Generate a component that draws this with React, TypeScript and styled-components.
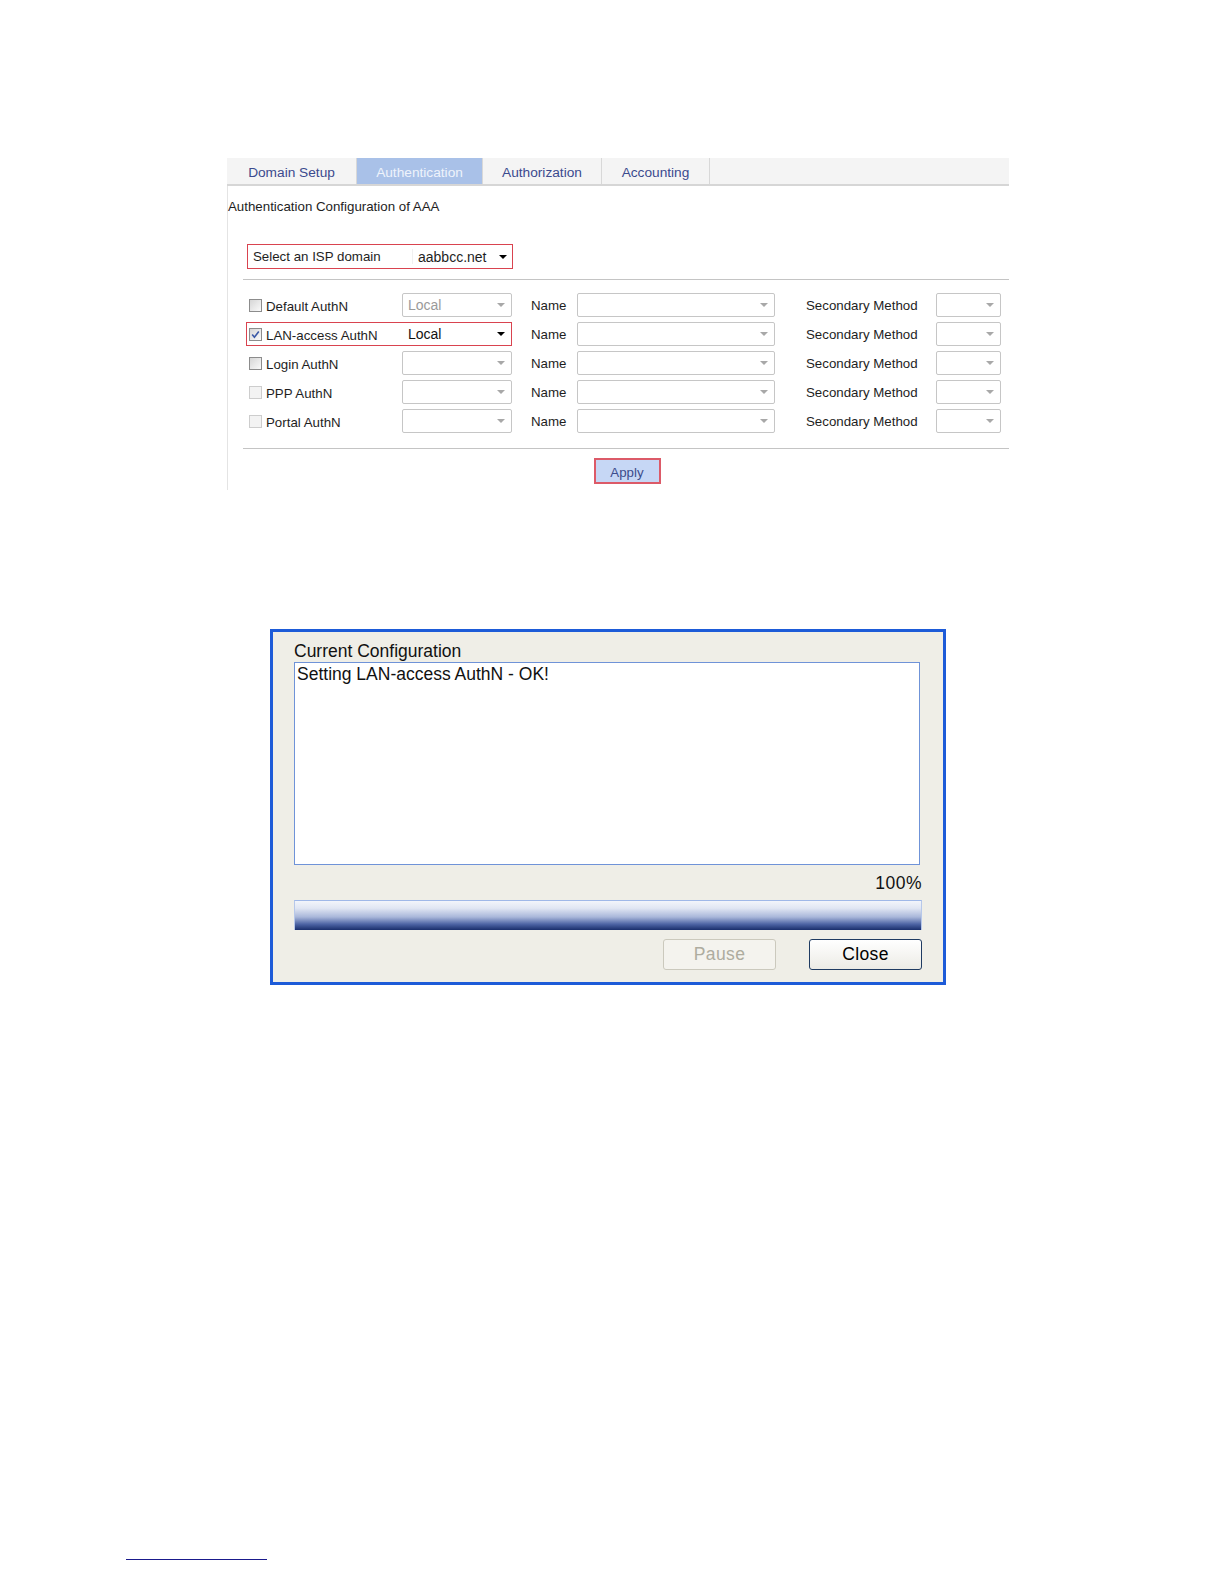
import React from 'react'
import styled, { createGlobalStyle } from 'styled-components'

const colors = {
  tabBar: "#f4f4f4",
  tabText: "#3b4a8e",
  tabActive: "#a9c1e8",
  red: "#d9434f",
  text: "#1e1e1e",
  muted: "#9a9a9a",
  line: "#c4c4c4",
  dialogBlue: "#1d5bd8",
  dialogBg: "#efeee7",
}

const GlobalStyle = createGlobalStyle`
  html, body {
    margin: 0;
    padding: 0;
    background: #fff;
    overflow: hidden;
  }
  body {
    font-family: 'Liberation Sans', Arial, sans-serif;
  }
`

const Page = styled.div`
  padding-top: 158px;
  display: flex;
  flex-direction: column;
  align-items: flex-start;
`

const Panel = styled.section`
  margin-left: 227px;
  width: 782px;
  display: flex;
  flex-direction: column;
`

const TabBar = styled.div`
  display: flex;
  height: 28px;
  box-sizing: border-box;
  background: ${colors.tabBar};
  border-bottom: 2px solid #d6d6d6;
`

const Tab = styled.div<{ $width: number; $active?: boolean }>`
  width: ${p => p.$width}px;
  box-sizing: border-box;
  display: flex;
  align-items: center;
  justify-content: center;
  padding-top: 3px;
  font-size: 13.7px;
  color: ${p => (p.$active ? '#eef3fb' : colors.tabText)};
  background: ${p => (p.$active ? colors.tabActive : 'transparent')};
  border-right: 1px solid #d8d8d8;
`

const Body = styled.div`
  border-left: 1px solid #e4e4e4;
  padding: 13px 0 6px 0;
  display: flex;
  flex-direction: column;
`

const Caption = styled.div`
  font-size: 13.3px;
  line-height: 16px;
  color: ${colors.text};
`

const IspBox = styled.div`
  margin: 29px 0 0 19px;
  width: 266px;
  height: 25px;
  box-sizing: border-box;
  border: 1px solid ${colors.red};
  display: flex;
  align-items: center;
  font-size: 13.3px;
  color: ${colors.text};
`

const IspLabel = styled.span`
  width: 165px;
  padding-left: 5px;
  box-sizing: border-box;
  border-right: 1px solid #f0f0f0;
`

const IspValue = styled.span`
  flex: 1;
  display: flex;
  align-items: center;
  justify-content: space-between;
  padding: 1px 5px 0 5px;
  font-size: 14px;
`

const Divider = styled.div<{ $top: number }>`
  margin: ${p => p.$top}px 0 0 15px;
  border-top: 1px solid ${colors.line};
`

const Rows = styled.div`
  margin: 13px 0 0 18px;
  display: flex;
  flex-direction: column;
  gap: 5px;
`

const Row = styled.div`
  display: grid;
  grid-template-columns: 266px 65px 198px 161px 65px;
  height: 24px;
  align-items: center;
  font-size: 13.3px;
  color: ${colors.text};
`

const Lead = styled.div<{ $highlight?: boolean }>`
  display: grid;
  grid-template-columns: 156px 110px;
  height: 24px;
  align-items: center;
  outline: ${p => (p.$highlight ? `1px solid ${colors.red}` : 'none')};
  outline-offset: -1px;
`

const CheckLabel = styled.label`
  display: flex;
  align-items: center;
  gap: 4px;
  padding: 2px 0 0 3px;
`

const Box = styled.span<{ $dim?: boolean }>`
  width: 13px;
  height: 13px;
  box-sizing: border-box;
  display: inline-flex;
  border: 1px solid ${p => (p.$dim ? '#cdcdcd' : '#8c8c8c')};
  background: ${p => (p.$dim ? '#f3f3f3' : 'linear-gradient(135deg, #d6d6d6, #fafafa)')};
  margin-top: -2px;
`

const FieldLabel = styled.span<{ $pad: number }>`
  padding-left: ${p => p.$pad}px;
`

const Combo = styled.div<{ $bare?: boolean; $muted?: boolean }>`
  height: 24px;
  box-sizing: border-box;
  border: 1px solid ${p => (p.$bare ? 'transparent' : '#c6c6c6')};
  border-radius: 2px;
  background: ${p => (p.$bare ? 'transparent' : '#fff')};
  display: flex;
  align-items: center;
  justify-content: space-between;
  padding: 0 6px 0 5px;
  font-size: 14px;
  color: ${p => (p.$muted ? colors.muted : '#111')};
`

const Caret = styled.span<{ $dark?: boolean }>`
  width: 0;
  height: 0;
  border-left: 4px solid transparent;
  border-right: 4px solid transparent;
  border-top: 4px solid ${p => (p.$dark ? '#000' : '#a8a8a8')};
  margin-left: auto;
`

const ApplyWrap = styled.div`
  margin: 9px 0 0 15px;
  display: flex;
  justify-content: center;
`

const ApplyButton = styled.button`
  width: 67px;
  height: 26px;
  box-sizing: border-box;
  border: 2px solid #dc5a68;
  background: #c6d7f5;
  color: #3c4c8c;
  font-family: 'Liberation Sans', Arial, sans-serif;
  font-size: 13.3px;
  padding: 3px 0 0 0;
  margin-left: 2px;
`

const Dialog = styled.section`
  margin: 139px 0 0 270px;
  width: 676px;
  height: 356px;
  box-sizing: border-box;
  border: 3px solid ${colors.dialogBlue};
  background: ${colors.dialogBg};
  padding: 9px 21px 0 21px;
  display: flex;
  flex-direction: column;
  font-size: 17.5px;
  color: #111;
`

const DialogTitle = styled.div`
  line-height: 20px;
  height: 20px;
`

const Output = styled.div`
  margin-top: 1px;
  width: 626px;
  height: 203px;
  box-sizing: border-box;
  border: 1px solid #6f93d8;
  background: #fff;
  padding: 1px 2px;
  line-height: 20px;
`

const Percent = styled.div`
  margin-top: 8px;
  line-height: 20px;
  text-align: right;
  letter-spacing: 0.5px;
`

const Progress = styled.div`
  margin-top: 7px;
  height: 30px;
  box-sizing: border-box;
  border-top: 1px solid #9fb8e8;
  border-left: 1px solid #b7c8ea;
  border-right: 1px solid #b7c8ea;
  background: linear-gradient(to bottom, #f2f5fb 0%, #e0e6f3 25%, #a9b7da 55%, #4d64a4 80%, #1a2f6c 100%);
`

const ButtonRow = styled.div`
  margin-top: 9px;
  display: flex;
  justify-content: flex-end;
  gap: 33px;
`

const DialogButton = styled.button<{ $disabled?: boolean }>`
  width: 113px;
  height: 31px;
  box-sizing: border-box;
  border-radius: 3px;
  border: 1px solid ${p => (p.$disabled ? '#cbc9bd' : '#1f3b62')};
  background: ${p => (p.$disabled ? '#f4f3ee' : 'linear-gradient(to bottom, #ffffff, #ecebe5)')};
  color: ${p => (p.$disabled ? '#aeac9f' : '#000')};
  font-family: 'Liberation Sans', Arial, sans-serif;
  font-size: 17.5px;
  letter-spacing: 0.4px;
  padding: 0;
`

const Footnote = styled.div`
  margin: 574px 0 0 126px;
  width: 141px;
  border-top: 1.5px solid #1a1a8c;
`

const CheckMark = () => (
  <svg width="11" height="11" viewBox="0 0 11 11">
    <path d="M2.2 5.6 L4.4 8.2 L8.8 2.4" fill="none" stroke="#3a58a6" strokeWidth="1.6" />
  </svg>
)

interface AuthRow {
  label: string
  checked?: boolean
  dim?: boolean
  value?: string
  highlight?: boolean
}

const rows: AuthRow[] = [
  { label: 'Default AuthN', value: 'Local' },
  { label: 'LAN-access AuthN', checked: true, value: 'Local', highlight: true },
  { label: 'Login AuthN' },
  { label: 'PPP AuthN', dim: true },
  { label: 'Portal AuthN', dim: true },
]

const tabs = [
  { name: 'Domain Setup', width: 130 },
  { name: 'Authentication', width: 126, active: true },
  { name: 'Authorization', width: 119 },
  { name: 'Accounting', width: 108 },
]

export default function App() {
  return (
    <Page>
      <GlobalStyle />
      <Panel>
        <TabBar>
          {tabs.map(t => (
            <Tab key={t.name} $width={t.width} $active={t.active}>{t.name}</Tab>
          ))}
        </TabBar>
        <Body>
          <Caption>Authentication Configuration of AAA</Caption>
          <IspBox>
            <IspLabel>Select an ISP domain</IspLabel>
            <IspValue>aabbcc.net<Caret $dark /></IspValue>
          </IspBox>
          <Divider $top={10} />
          <Rows>
            {rows.map(r => (
              <Row key={r.label}>
                <Lead $highlight={r.highlight}>
                  <CheckLabel>
                    <Box $dim={r.dim}>{r.checked && <CheckMark />}</Box>
                    {r.label}
                  </CheckLabel>
                  <Combo $bare={r.highlight} $muted={!r.highlight}>
                    {r.value}
                    <Caret $dark={r.highlight} />
                  </Combo>
                </Lead>
                <FieldLabel $pad={19}>Name</FieldLabel>
                <Combo><Caret /></Combo>
                <FieldLabel $pad={31}>Secondary Method</FieldLabel>
                <Combo><Caret /></Combo>
              </Row>
            ))}
          </Rows>
          <Divider $top={15} />
          <ApplyWrap>
            <ApplyButton>Apply</ApplyButton>
          </ApplyWrap>
        </Body>
      </Panel>

      <Dialog>
        <DialogTitle>Current Configuration</DialogTitle>
        <Output>Setting LAN-access AuthN - OK!</Output>
        <Percent>100%</Percent>
        <Progress />
        <ButtonRow>
          <DialogButton $disabled>Pause</DialogButton>
          <DialogButton>Close</DialogButton>
        </ButtonRow>
      </Dialog>

      <Footnote />
    </Page>
  )
}
